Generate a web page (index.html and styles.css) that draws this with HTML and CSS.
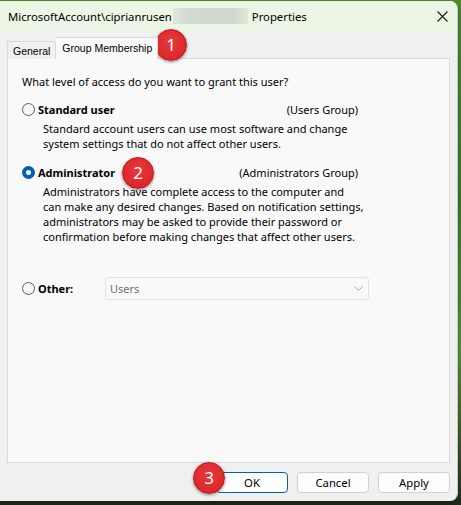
FILE: index.html
```html
<!DOCTYPE html>
<html>
<head>
<meta charset="utf-8">
<link rel="stylesheet" href="styles.css">
</head>
<body>
<div class="window">
  <div class="titlebar">
    <span class="title">MicrosoftAccount\ciprianrusen</span>
    <span class="blurred"></span>
    <span class="title">Properties</span>
    <svg class="close" width="11" height="11" viewBox="0 0 11 11"><path d="M0.5 0.5 L10.5 10.5 M10.5 0.5 L0.5 10.5" stroke="#1a1a1a" stroke-width="1.1" fill="none"/></svg>
  </div>
  <div class="content">
    <div class="tabs">
      <div class="tab">General</div>
      <div class="tab active">Group Membership</div>
    </div>
    <div class="panel">
      <div class="question">What level of access do you want to grant this user?</div>
      <div class="option-row first">
        <span class="radio"></span>
        <span class="opt-label">Standard user</span>
        <span class="group">(Users Group)</span>
      </div>
      <div class="desc">Standard account users can use most software and change<br>system settings that do not affect other users.</div>
      <div class="option-row second">
        <span class="radio checked"></span>
        <span class="opt-label">Administrator</span>
        <span class="group">(Administrators Group)</span>
      </div>
      <div class="desc">Administrators have complete access to the computer and<br>can make any desired changes. Based on notification settings,<br>administrators may be asked to provide their password or<br>confirmation before making changes that affect other users.</div>
      <div class="option-row other">
        <span class="radio"></span>
        <span class="opt-label other-label">Other:</span>
        <div class="combo">
          <span class="combo-text">Users</span>
          <svg class="chevron" width="9" height="5" viewBox="0 0 9 5"><path d="M0.5 0.5 L4.5 4.5 L8.5 0.5" stroke="#a6a6a6" stroke-width="1" fill="none"/></svg>
        </div>
      </div>
    </div>
    <div class="buttons">
      <button class="btn default">OK</button>
      <button class="btn">Cancel</button>
      <button class="btn">Apply</button>
    </div>
  </div>
  <div class="badge b1">1</div>
  <div class="badge b2">2</div>
  <div class="badge b3">3</div>
</div>
</body>
</html>
```
FILE: styles.css
```css
html, body {
  margin: 0;
  padding: 0;
}
body {
  width: 461px;
  height: 505px;
  overflow: hidden;
  background: linear-gradient(180deg, #4f8f2e 0%, #3f7f25 40%, #5a9a34 70%, #2c3a22 97%, #1f2a18 100%);
  font-family: "Noto Sans", "Segoe UI", sans-serif;
  font-size: 11px;
  color: #000;
}
.window {
  position: relative;
  width: 457px;
  height: 500px;
  margin-top: 1px;
  background: #f0f0f0;
  border-right: 1px solid #c9c9c9;
  border-radius: 0 8px 8px 0;
  overflow: hidden;
  box-shadow: 0 2px 6px rgba(0,0,0,0.35);
}
.titlebar {
  height: 30px;
  background: #ebf6e5;
  display: flex;
  align-items: center;
  padding-left: 8px;
  font-size: 11.3px;
}
.title {
  color: #000;
  white-space: nowrap;
}
.blurred {
  display: inline-block;
  width: 75px;
  height: 16px;
  margin: 0 4px 0 1px;
  background: linear-gradient(90deg, #dfe6dc 0%, #d2dbcf 20%, #d0d9cd 80%, #dfe6dc 100%);
}
.close {
  margin-left: auto;
  margin-right: 9px;
}
.content {
  padding: 6px 7px 0 7px;
}
.tabs {
  display: flex;
  align-items: flex-end;
  height: 22px;
  position: relative;
  z-index: 1;
  margin-bottom: -1px;
  font-family: "Liberation Sans", Arial, sans-serif;
  font-size: 10.5px;
}
.tab {
  height: 17px;
  line-height: 18px;
  padding: 0 5px 0 5px;
  border: 1px solid #d9d9d9;
  border-bottom: none;
  background: #f0f0f0;
  color: #000;
}
.tab.active {
  height: 21px;
  line-height: 20px;
  padding: 0 5px 0 6px;
  background: #f9f9f9;
  border-left: none;
}
.panel {
  box-sizing: border-box;
  height: 405px;
  border: 1px solid #d9d9d9;
  background: #f9f9f9;
  padding: 15px 0 0 14px;
  line-height: 15px;
}
.question {
  height: 15px;
}
.option-row {
  display: flex;
  align-items: center;
  height: 15px;
  width: 336px;
}
.option-row.first {
  margin-top: 13px;
}
.option-row.second {
  margin-top: 14px;
}
.option-row.other {
  margin-top: 33px;
  height: 23px;
  width: auto;
}
.radio {
  width: 11px;
  height: 11px;
  border: 1px solid #5f5f5f;
  border-radius: 50%;
  background: #f6f6f6;
  flex: none;
  box-sizing: content-box;
}
.radio.checked {
  width: 5px;
  height: 5px;
  border: 4px solid #005fb8;
  background: #fff;
}
.opt-label {
  font-weight: bold;
  margin-left: 3px;
}
.group {
  margin-left: auto;
}
.desc {
  margin: 4px 0 0 21px;
}
.other-label {
  width: 67px;
}
.combo {
  width: 253px;
  height: 21px;
  border: 1px solid #e2e2e2;
  border-radius: 3px;
  background: #f9f9f9;
  display: flex;
  align-items: center;
  padding: 0 5px 0 4px;
  box-sizing: content-box;
}
.combo-text {
  color: #6d6d6d;
}
.chevron {
  margin-left: auto;
}
.buttons {
  display: flex;
  justify-content: flex-end;
  gap: 9px;
  margin-top: 9px;
}
.btn {
  width: 72px;
  height: 21px;
  padding: 0;
  border: 1px solid #d0d0d0;
  border-radius: 4px;
  background: #fdfdfd;
  font-family: "Noto Sans", "Segoe UI", sans-serif;
  font-size: 11.3px;
  color: #000;
  line-height: 18px;
}
.btn.default {
  border-color: #005fb8;
}
.badge {
  position: absolute;
  width: 32px;
  height: 32px;
  border-radius: 50%;
  background: radial-gradient(circle at 50% 40%, #e8393b 0%, #de2a2d 60%, #cc1f23 100%);
  border: 1px solid #b8191c;
  box-shadow: 0 1px 3px rgba(0,0,0,0.45);
  color: #fff;
  font-family: "Noto Sans", "Segoe UI", sans-serif;
  font-size: 17px;
  line-height: 30px;
  text-align: center;
  box-sizing: border-box;
}
.b1 { left: 155px; top: 28px; }
.b2 { left: 122px; top: 156px; }
.b3 { left: 193px; top: 461px; }
```
